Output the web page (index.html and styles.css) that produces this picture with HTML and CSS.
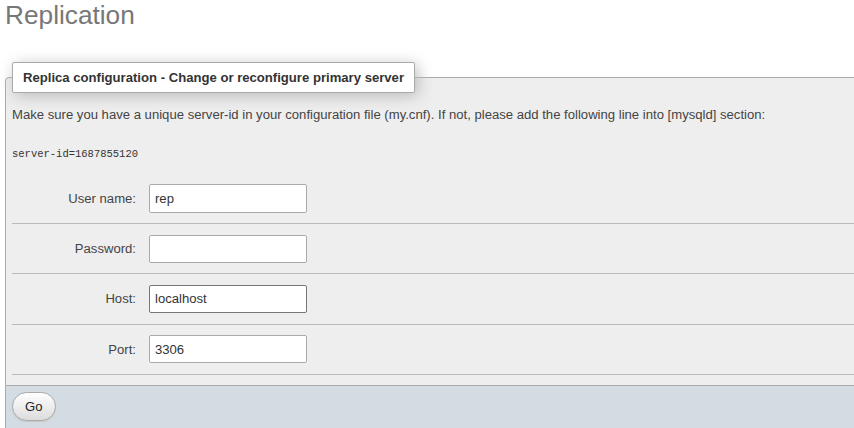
FILE: index.html
```html
<!DOCTYPE html>
<html lang="en">
<head>
<meta charset="utf-8">
<title>Replication</title>
<link rel="stylesheet" href="styles.css">
</head>
<body>
<div class="page">
  <h2 class="title">Replication</h2>
  <form class="form">
    <fieldset class="config">
      <legend class="legend">Replica configuration - Change or reconfigure primary server</legend>
      <p class="note">Make sure you have a unique server-id in your configuration file (my.cnf). If not, please add the following line into [mysqld] section:</p>
      <div class="code">server-id=1687855120</div>
      <div class="row">
        <label class="label" for="user">User name:</label>
        <input class="field" id="user" type="text" value="rep">
      </div>
      <div class="row">
        <label class="label" for="pass">Password:</label>
        <input class="field" id="pass" type="password" value="">
      </div>
      <div class="row">
        <label class="label" for="host">Host:</label>
        <input class="field field-active" id="host" type="text" value="localhost">
      </div>
      <div class="row">
        <label class="label" for="port">Port:</label>
        <input class="field" id="port" type="text" value="3306">
      </div>
    </fieldset>
    <div class="footer">
      <button class="btn" type="button">Go</button>
    </div>
  </form>
</div>
</body>
</html>
```
FILE: styles.css
```css
html, body {
  margin: 0;
  padding: 0;
  overflow: hidden;
  background: #fff;
}
body {
  font-family: "Liberation Sans", Arial, sans-serif;
  font-size: 13.12px;
  color: #444;
}
.page {
  padding-left: 5px;
}
.title {
  margin: 0;
  font-size: 26.24px;
  line-height: 30px;
  font-weight: normal;
  color: #777;
}
.form {
  margin: 32px -20px 0 0;
}
.config {
  margin: 0;
  padding: 0 0 10px 6px;
  border: 1px solid #aaa;
  border-radius: 4px 4px 0 0;
  background: #eee;
  min-inline-size: 0;
}
.legend {
  padding: 5px 10px;
  line-height: 19px;
  font-weight: bold;
  font-size: 13.12px;
  color: #333;
  background: #fff;
  border: 1px solid #aaa;
  border-radius: 2px;
  box-shadow: 3px 3px 15px #bbb;
}
.note {
  margin: 14px 0 0;
  line-height: 16px;
}
.code {
  margin: 25px 0 12.8px;
  font-family: "Liberation Mono", "DejaVu Sans Mono", monospace;
  font-size: 10.5px;
  line-height: 13px;
  color: #333;
}
.row {
  display: flex;
  align-items: center;
  padding: 10.5px 0;
  border-bottom: 1px solid #bbb;
}
.label {
  width: 124px;
  margin-right: 13px;
  text-align: right;
  color: #444;
}
.field {
  box-sizing: border-box;
  width: 158px;
  height: 28.25px;
  margin: 0;
  padding: 0 5px;
  border: 1px solid #aaa;
  border-radius: 2px;
  background: #fff;
  font-family: "Liberation Sans", Arial, sans-serif;
  font-size: 13.12px;
  color: #333;
  outline: none;
}
.field-active {
  border-color: #767676;
}
.footer {
  border-left: 1px solid #aaa;
  background: #d3dce3;
  padding: 6px 6px 10px;
}
.btn {
  display: block;
  margin: 0;
  padding: 6px 12px;
  font-family: "Liberation Sans", Arial, sans-serif;
  font-size: 13.12px;
  line-height: 15px;
  color: #222;
  background: linear-gradient(#ffffff, #dcdcdc);
  border: 1px solid #aaa;
  border-radius: 20px;
  box-shadow: 0 1px 1px #c8c8c8;
}
```
